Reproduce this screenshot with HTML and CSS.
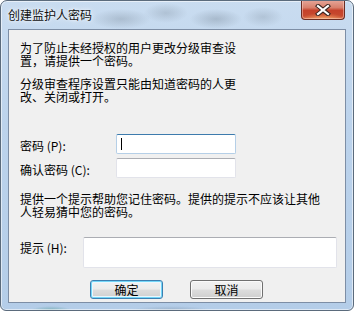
FILE: index.html
```html
<!DOCTYPE html>
<html lang="zh-CN">
<head>
<meta charset="utf-8">
<title>创建监护人密码</title>
<link rel="stylesheet" href="styles.css">
</head>
<body>
<div class="window">
  <div class="titlebar">
    <span class="title">创建监护人密码</span>
    <button class="close" type="button" aria-label="关闭">
      <svg width="16" height="12" viewBox="0 0 16 12">
        <path d="M3 2 L13 10 M13 2 L3 10" stroke="#3a2520" stroke-width="4.2" stroke-linecap="square" fill="none"/>
        <path d="M3 2 L13 10 M13 2 L3 10" stroke="#ffffff" stroke-width="2.2" stroke-linecap="square" fill="none"/>
      </svg>
    </button>
  </div>
  <div class="client">
    <p class="para narrow">为了防止未经授权的用户更改分级审查设置，请提供一个密码。</p>
    <p class="para narrow gap-s">分级审查程序设置只能由知道密码的人更改、关闭或打开。</p>
    <div class="fields">
      <label class="lbl">密码 (P):</label>
      <div class="textbox focused"><span class="caret"></span></div>
      <label class="lbl">确认密码 (C):</label>
      <div class="textbox"></div>
    </div>
    <p class="para wide">提供一个提示帮助您记住密码。提供的提示不应该让其他人轻易猜中您的密码。</p>
    <div class="hint-row">
      <label class="lbl hint-lbl">提示 (H):</label>
      <div class="textbox hint"></div>
    </div>
    <div class="buttons">
      <button class="btn default" type="button">确定</button>
      <button class="btn" type="button">取消</button>
    </div>
  </div>
</div>
</body>
</html>
```
FILE: styles.css
```css
* { box-sizing: border-box; }
html, body { margin: 0; padding: 0; background: #ffffff; }
body {
  font-family: "Noto Sans CJK SC", "Liberation Sans", sans-serif;
  font-size: 12px;
  color: #000;
}
.window {
  width: 354px;
  height: 311px;
  border-radius: 7px 7px 6px 6px;
  border: 1px solid #5b6b7c;
  background:
    radial-gradient(ellipse 30px 10px at 120px 18px, rgba(120,135,150,0.35), transparent),
    radial-gradient(ellipse 22px 10px at 165px 12px, rgba(120,135,150,0.30), transparent),
    radial-gradient(ellipse 26px 10px at 215px 18px, rgba(110,125,140,0.35), transparent),
    radial-gradient(ellipse 20px 10px at 262px 16px, rgba(120,135,150,0.28), transparent),
    radial-gradient(ellipse 20px 4px at 50px 309px, rgba(60,140,130,0.45), transparent),
    radial-gradient(ellipse 40px 4px at 170px 309px, rgba(100,120,140,0.35), transparent),
    linear-gradient(#c9dcf0, #bcd3ec 40%, #b4cde8);
  box-shadow: inset 0 0 0 1px rgba(255,255,255,0.55);
  display: flex;
  flex-direction: column;
  overflow: hidden;
}
.titlebar {
  height: 28px;
  display: flex;
  align-items: flex-start;
  padding-left: 7px;
  padding-right: 8px;
}
.title {
  margin-top: 7px;
  line-height: 14px;
  color: #101010;
  text-shadow: 0 0 6px rgba(255,255,255,0.9), 0 0 3px rgba(255,255,255,0.9);
}
.close {
  margin-left: auto;
  margin-top: -1px;
  width: 44px;
  height: 20px;
  padding: 0;
  border: 1px solid #6b2c22;
  border-top: none;
  border-radius: 0 0 4px 4px;
  background:
    radial-gradient(ellipse 22px 6px at 50% 100%, rgba(255,190,120,0.7), transparent),
    linear-gradient(#e7a89b 0%, #d8806c 40%, #c5412a 55%, #c74a2f 85%, #d9704a 100%);
  box-shadow: inset 0 0 0 1px rgba(255,220,210,0.45);
  display: flex;
  align-items: center;
  justify-content: center;
}
.client {
  width: 338px;
  height: 274px;
  margin: 0 7px;
  border: 1px solid #7d8ea5;
  background: #f0f0f0;
  padding: 11px 0 0 11px;
}
.para {
  margin: 0;
  line-height: 13px;
}
.narrow { width: 230px; }
.wide { width: 310px; margin-top: 14px; }
.gap-s { margin-top: 10px; }
.fields {
  margin-top: 31px;
  display: grid;
  grid-template-columns: 96px 120px;
  grid-auto-rows: 20px;
  row-gap: 4px;
  align-items: center;
}
.lbl {
  line-height: 13px;
  padding-top: 2px;
  white-space: pre;
}
.textbox {
  height: 20px;
  background: #ffffff;
  border: 1px solid #e2e3ea;
  border-top-color: #abadb3;
  border-radius: 2px;
  display: flex;
  align-items: center;
}
.textbox.focused {
  border-color: #b5cfe7;
  border-top-color: #3d7bad;
}
.caret {
  display: block;
  width: 1px;
  height: 12px;
  margin-left: 4px;
  background: #000;
}
.hint-row {
  margin-top: 19px;
  display: grid;
  grid-template-columns: 63px 254px;
  align-items: start;
}
.hint-lbl { margin-top: 4px; padding-top: 0; }
.textbox.hint { height: 31px; }
.buttons {
  margin-top: 12px;
  margin-left: 70px;
  display: flex;
  gap: 27px;
}
.btn {
  width: 73px;
  height: 19px;
  padding: 0;
  font: inherit;
  line-height: 13px;
  color: #000;
  border: 1px solid #707070;
  border-radius: 3px;
  background: linear-gradient(#f2f2f2 0%, #ebebeb 48%, #dddddd 52%, #cfcfcf 100%);
  box-shadow: inset 0 0 0 1px #fbfbfb;
}
.btn.default {
  border-color: #3c7fb1;
  box-shadow: inset 0 0 0 1px #73d6f8, inset 0 0 0 2px #eaf6fd;
}
```
